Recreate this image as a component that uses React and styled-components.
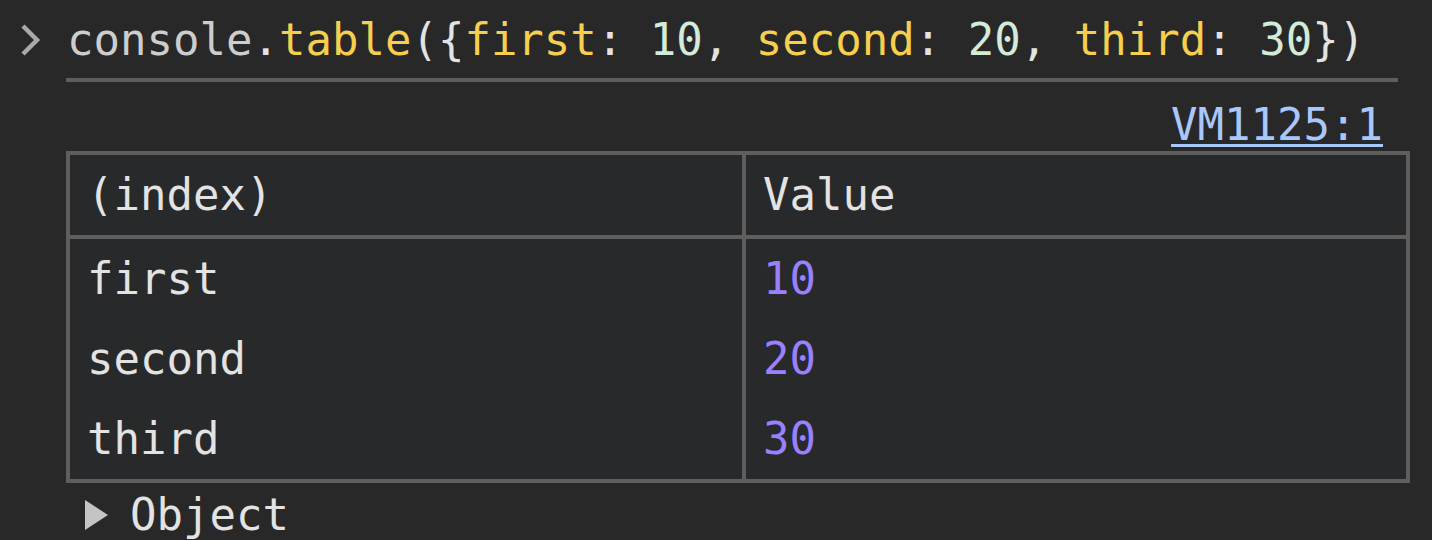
import React from "react";
import styled, { createGlobalStyle } from "styled-components";

const GlobalStyle = createGlobalStyle`
  html, body {
    margin: 0;
    padding: 0;
    background: #282828;
  }
  body {
    font-family: "DejaVu Sans Mono", "Liberation Mono", monospace;
    font-size: 44px;
    color: #e3e3e3;
  }
`;

// devtools dark palette
const colors = {
  bg: "#282828",
  grid: "#28292b",
  border: "#5e5e5e",
  text: "#e3e3e3",
  ident: "#cdcdcd",
  prop: "#f6cf4f",
  num: "#d3ecd9",
  value: "#9980ff",
  link: "#a8c7fa",
  chevron: "#a9a9a9"
};

const Console = styled.div`
  display: flex;
  flex-direction: column;
  width: 1432px;
  height: 540px;
  overflow: hidden;
  line-height: 52px;
`;

const InputRow = styled.div`
  display: flex;
  padding-top: 14px;
`;

const Prompt = styled.div`
  width: 66px;
  flex: none;
  display: flex;
  align-items: center;
  height: 52px;
  padding-left: 20px;
  box-sizing: border-box;
`;

const Code = styled.div`
  flex: 1;
  margin-right: 34px;
  padding-left: 1px;
  padding-bottom: 12px;
  border-bottom: 4px solid ${colors.border};
  white-space: pre;
`;

const Tok = styled.span`
  color: ${(p) => colors[p.$kind] || colors.text};
`;

const Message = styled.div`
  display: flex;
  flex-direction: column;
  padding: 17px 22px 0 66px;
`;

const SourceRow = styled.div`
  display: flex;
  justify-content: flex-end;
  padding-right: 27px;
`;

const SourceLink = styled.a`
  color: ${colors.link};
  text-decoration: underline;
  text-decoration-thickness: 3px;
  text-underline-offset: 4px;
  cursor: pointer;
`;

const Grid = styled.table`
  width: 1344px;
  table-layout: fixed;
  border-collapse: separate;
  border-spacing: 0;
  border: 4px solid ${colors.border};
  background: ${colors.grid};
  font: inherit;
  color: ${colors.text};
`;

const HeadCell = styled.th`
  height: 80px;
  box-sizing: border-box;
  padding: 14px 17px;
  text-align: left;
  font-weight: normal;
  white-space: pre;
  border-bottom: 4px solid ${colors.border};
  border-right: ${(p) => (p.$first ? `4px solid ${colors.border}` : "none")};
  width: ${(p) => (p.$first ? "676px" : "auto")};
`;

const Cell = styled.td`
  height: 80px;
  box-sizing: border-box;
  padding: 14px 17px;
  white-space: pre;
  color: ${(p) => (p.$number ? colors.value : colors.text)};
  border-right: ${(p) => (p.$first ? `4px solid ${colors.border}` : "none")};
`;

const ObjectRow = styled.div`
  display: flex;
  align-items: center;
  gap: 22px;
  margin-top: 6px;
  padding-left: 19px;
  color: ${colors.text};
`;

const Chevron = () => (
  <svg width="22" height="34" viewBox="0 0 22 34">
    <polyline
      points="3,3 17,17 3,31"
      fill="none"
      stroke={colors.chevron}
      strokeWidth="4.5"
    />
  </svg>
);

const Triangle = () => (
  <svg width="23" height="30" viewBox="0 0 23 30">
    <polygon points="0,0 23,15 0,30" fill="#c4c4c4" />
  </svg>
);

const rows = [
  ["first", "10"],
  ["second", "20"],
  ["third", "30"]
];

export default function App() {
  return (
    <>
      <GlobalStyle />
      <Console>
        <InputRow>
          <Prompt>
            <Chevron />
          </Prompt>
          <Code>
            <Tok $kind="ident">console</Tok>
            <Tok>.</Tok>
            <Tok $kind="prop">table</Tok>
            <Tok>({"{"}</Tok>
            <Tok $kind="prop">first</Tok>
            <Tok>: </Tok>
            <Tok $kind="num">10</Tok>
            <Tok>, </Tok>
            <Tok $kind="prop">second</Tok>
            <Tok>: </Tok>
            <Tok $kind="num">20</Tok>
            <Tok>, </Tok>
            <Tok $kind="prop">third</Tok>
            <Tok>: </Tok>
            <Tok $kind="num">30</Tok>
            <Tok>{"})"}</Tok>
          </Code>
        </InputRow>
        <Message>
          <SourceRow>
            <SourceLink>VM1125:1</SourceLink>
          </SourceRow>
          <Grid>
            <thead>
              <tr>
                <HeadCell $first>(index)</HeadCell>
                <HeadCell>Value</HeadCell>
              </tr>
            </thead>
            <tbody>
              {rows.map(([key, val]) => (
                <tr key={key}>
                  <Cell $first>{key}</Cell>
                  <Cell $number>{val}</Cell>
                </tr>
              ))}
            </tbody>
          </Grid>
          <ObjectRow>
            <Triangle />
            <span>Object</span>
          </ObjectRow>
        </Message>
      </Console>
    </>
  );
}
